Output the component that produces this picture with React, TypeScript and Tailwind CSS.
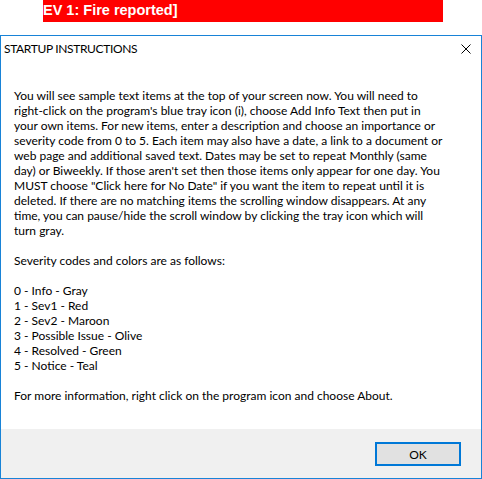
import React from "react";

const bodyLines: string[] = [
  "You will see sample text items at the top of your screen now. You will need to",
  "right-click on the program's blue tray icon (i), choose Add Info Text then put in",
  "your own items. For new items, enter a description and choose an importance or",
  "severity code from 0 to 5. Each item may also have a date, a link to a document or",
  "web page and additional saved text. Dates may be set to repeat Monthly (same",
  "day) or Biweekly. If those aren't set then those items only appear for one day. You",
  "MUST choose \"Click here for No Date\" if you want the item to repeat until it is",
  "deleted. If there are no matching items the scrolling window disappears. At any",
  "time, you can pause/hide the scroll window by clicking the tray icon which will",
  "turn gray.",
  "",
  "Severity codes and colors are as follows:",
  "",
  "0 - Info - Gray",
  "1 - Sev1 - Red",
  "2 - Sev2 - Maroon",
  "3 - Possible Issue - Olive",
  "4 - Resolved - Green",
  "5 - Notice - Teal",
  "",
  "For more information, right click on the program icon and choose About.",
];

export default function App() {
  return (
    <div className="w-[482px] h-[479px] bg-white overflow-hidden flex flex-col">
      <div className="ml-[43px] w-[400px] h-[22px] bg-[#ff0000] text-white font-bold text-[14.5px] leading-[20px] whitespace-nowrap [font-family:'Liberation_Sans',Arial,sans-serif]">
        EV 1: Fire reported]
      </div>
      <div className="mt-[13px] h-[444px] border border-[#1883d7] flex flex-col bg-white text-black [font-family:Lato,'Open_Sans',sans-serif] text-[12px] leading-[15px]">
        <div className="h-[25px] flex items-center justify-between pl-[3px] pr-[10px]">
          <span className="whitespace-nowrap tracking-[-0.35px]">STARTUP INSTRUCTIONS</span>
          <svg width="10" height="10" viewBox="0 0 10 10" className="block">
            <path d="M0.5 0.5 L9.5 9.5 M9.5 0.5 L0.5 9.5" stroke="#000" strokeWidth="1" fill="none" />
          </svg>
        </div>
        <div className="flex-1 pt-[27px] pl-[13px]">
          {bodyLines.map((line, i) => (
            <div key={i} className="h-[15px] whitespace-nowrap">
              {line === "" ? "\u00a0" : line}
            </div>
          ))}
        </div>
        <div className="h-[49px] bg-[#f0f0f0] flex justify-end items-start pt-[13px] pr-[20px]">
          <button className="w-[86px] h-[24px] border-2 border-[#0078d7] bg-[#e1e1e1] flex items-center justify-center text-[12px] text-black">
            OK
          </button>
        </div>
      </div>
    </div>
  );
}
